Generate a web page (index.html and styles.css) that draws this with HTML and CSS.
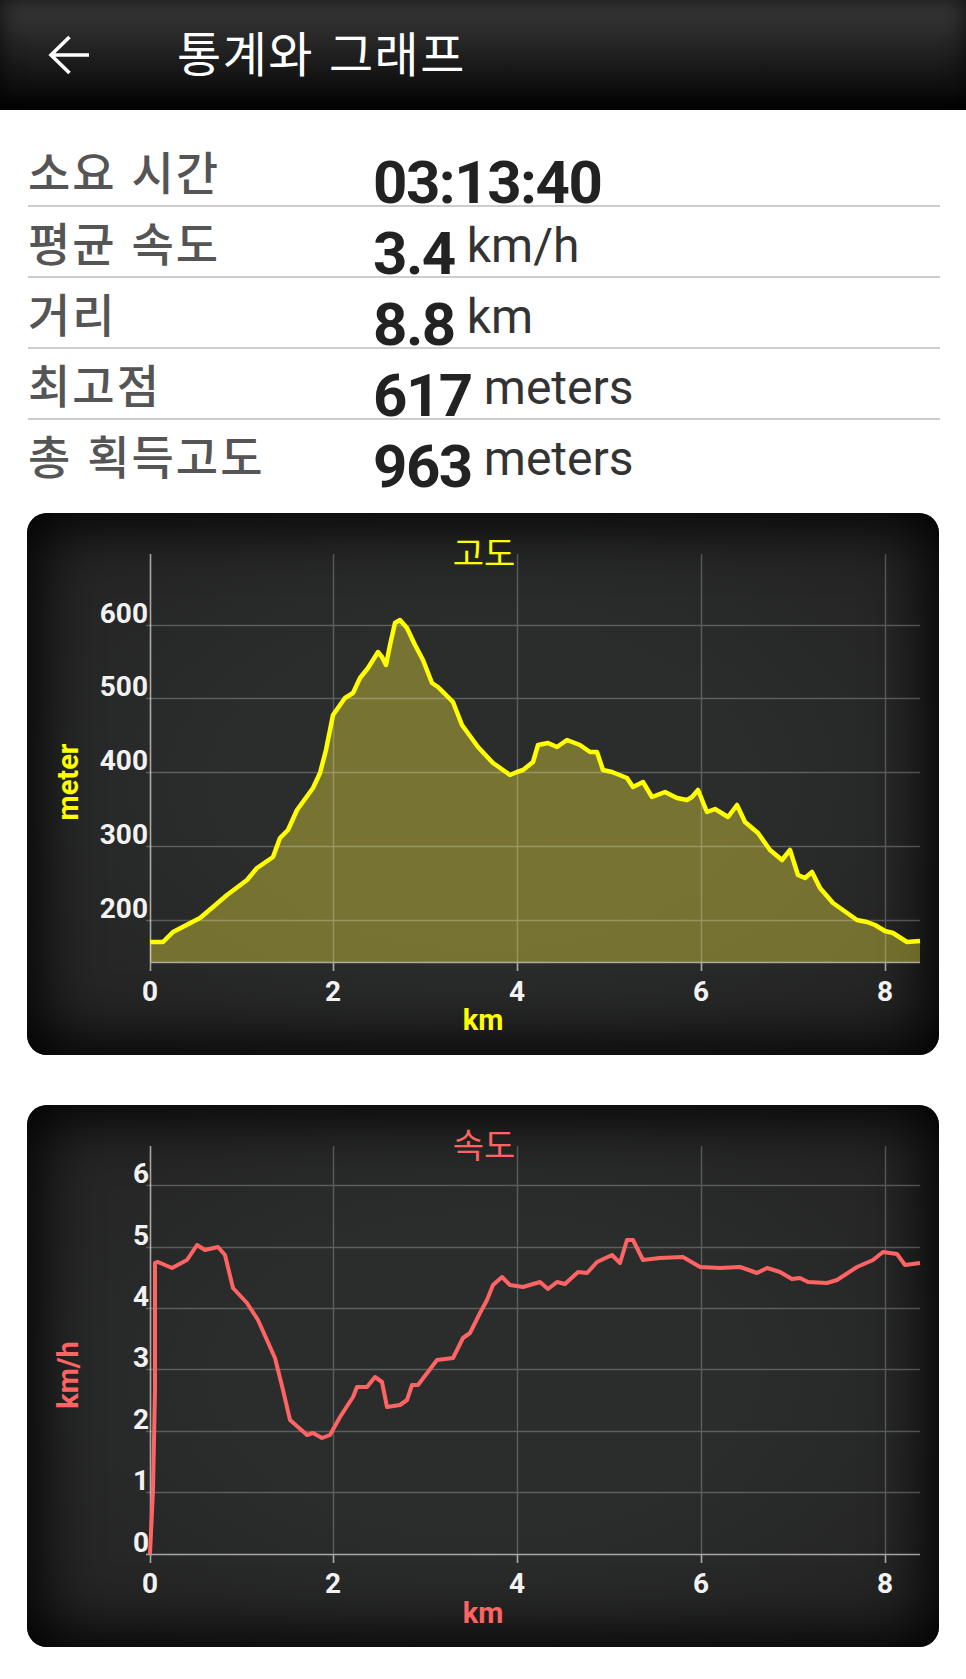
FILE: index.html
```html
<!DOCTYPE html>
<html lang="ko">
<head>
    <meta charset="utf-8">
    <title>통계와 그래프</title>
    <meta name="viewport" content="width=device-width,initial-scale=1">
    <link rel="stylesheet" href="styles.css">
</head>
<body>
    <div class="topBar">
        <svg class="backIcon" viewBox="0 0 44 40" width="44" height="40">
            <path d="M43 20H5 M23.5 2 L5 20 L23.5 38" />
        </svg>
        <div class="topTitle">통계와 그래프</div>
    </div>

    <div class="statList">
        <div class="statRow">
            <div class="statLabel">소요 시간</div>
            <div class="statValue">03:13:40</div>
        </div>
        <div class="statRow">
            <div class="statLabel">평균 속도</div>
            <div class="statValue">3.4<span class="statUnit">km/h</span></div>
        </div>
        <div class="statRow">
            <div class="statLabel">거리</div>
            <div class="statValue">8.8<span class="statUnit">km</span></div>
        </div>
        <div class="statRow">
            <div class="statLabel">최고점</div>
            <div class="statValue">617<span class="statUnit wide">meters</span></div>
        </div>
        <div class="statRow">
            <div class="statLabel">총 획득고도</div>
            <div class="statValue">963<span class="statUnit wide">meters</span></div>
        </div>
    </div>

    <!-- altitude -->
    <div class="chartCard">
        <svg class="chartSvg" viewBox="0 0 912 542" width="912" height="542">
            <text class="chartTitle alt" x="457" y="53">고도</text>
            <path class="altFill" d="M123,449 L123,429 L136,429 L146,419 L173,405 L186,394 L200,382 L220,367 L230,355 L246,344 L253,325 L261,317 L270,297 L286,275 L293,260 L299,237 L306,202 L318,185 L326,180 L333,165 L341,155 L351,139 L355,144 L359,152 L363,132 L368,110 L373,107 L380,115 L388,132 L396,147 L405,170 L411,174 L426,189 L435,212 L451,234 L466,250 L483,262 L490,259 L496,257 L506,249 L511,232 L521,230 L530,234 L540,227 L553,232 L563,239 L570,239 L576,257 L585,259 L600,265 L606,274 L616,269 L625,284 L638,279 L650,285 L660,287 L665,284 L671,277 L680,299 L688,296 L701,304 L710,292 L718,309 L731,320 L743,337 L755,347 L763,337 L771,362 L778,365 L785,359 L793,375 L806,390 L830,407 L840,409 L848,412 L858,418 L866,420 L880,429 L893,428 L893,449 Z" />
            <path class="grid" d="M306.5 41V449 M490.5 41V449 M674.5 41V449 M858.5 41V449 M119 112.5H893 M119 185.5H893 M119 259.5H893 M119 333.5H893 M119 407.5H893" />
            <path class="axis" d="M123.5 41V458 M123 449.5H893 M306.5 449V458 M490.5 449V458 M674.5 449V458 M858.5 449V458" />
            <path class="altLine" d="M123,429 L136,429 L146,419 L173,405 L186,394 L200,382 L220,367 L230,355 L246,344 L253,325 L261,317 L270,297 L286,275 L293,260 L299,237 L306,202 L318,185 L326,180 L333,165 L341,155 L351,139 L355,144 L359,152 L363,132 L368,110 L373,107 L380,115 L388,132 L396,147 L405,170 L411,174 L426,189 L435,212 L451,234 L466,250 L483,262 L490,259 L496,257 L506,249 L511,232 L521,230 L530,234 L540,227 L553,232 L563,239 L570,239 L576,257 L585,259 L600,265 L606,274 L616,269 L625,284 L638,279 L650,285 L660,287 L665,284 L671,277 L680,299 L688,296 L701,304 L710,292 L718,309 L731,320 L743,337 L755,347 L763,337 L771,362 L778,365 L785,359 L793,375 L806,390 L830,407 L840,409 L848,412 L858,418 L866,420 L880,429 L893,428" />
            <g class="yLabels">
                <text x="121" y="110">600</text>
                <text x="121" y="183">500</text>
                <text x="121" y="257">400</text>
                <text x="121" y="331">300</text>
                <text x="121" y="405">200</text>
            </g>
            <g class="xLabels">
                <text x="123" y="488">0</text>
                <text x="306" y="488">2</text>
                <text x="490" y="488">4</text>
                <text x="674" y="488">6</text>
                <text x="858" y="488">8</text>
            </g>
            <text class="axisTitle alt" x="456" y="517">km</text>
            <text class="axisTitle alt" transform="translate(51 269) rotate(-90)">meter</text>
        </svg>
    </div>

    <!-- speed -->
    <div class="chartCard">
        <svg class="chartSvg" viewBox="0 0 912 542" width="912" height="542">
            <text class="chartTitle spd" x="457" y="53">속도</text>
            <path class="grid" d="M306.5 41V449 M490.5 41V449 M674.5 41V449 M858.5 41V449 M119 80.5H893 M119 142.5H893 M119 203.5H893 M119 264.5H893 M119 326.5H893 M119 387.5H893" />
            <path class="axis" d="M123.5 41V458 M119 449.5H893 M306.5 449V458 M490.5 449V458 M674.5 449V458 M858.5 449V458" />
            <path class="spdLine" d="M123,449 L126,385 L127,335 L128,285 L128,158 L131,157 L145,163 L160,155 L170,140 L178,145 L191,142 L198,150 L206,183 L220,198 L231,215 L248,253 L256,285 L263,315 L280,330 L286,328 L295,333 L303,330 L313,312 L326,292 L330,282 L340,282 L348,272 L355,277 L360,302 L373,300 L380,295 L385,280 L391,280 L410,255 L426,253 L436,233 L443,228 L453,208 L460,195 L466,180 L475,172 L483,180 L496,182 L513,177 L521,184 L530,177 L538,179 L551,167 L560,168 L570,157 L585,150 L593,158 L600,135 L606,135 L616,155 L633,153 L656,152 L673,162 L693,163 L713,162 L730,168 L740,163 L753,167 L765,174 L773,173 L781,177 L800,178 L810,175 L830,162 L846,155 L856,147 L870,149 L878,160 L893,158" />
            <g class="yLabels">
                <text x="122" y="78">6</text>
                <text x="122" y="140">5</text>
                <text x="122" y="201">4</text>
                <text x="122" y="262">3</text>
                <text x="122" y="324">2</text>
                <text x="122" y="385">1</text>
                <text x="122" y="447">0</text>
            </g>
            <g class="xLabels">
                <text x="123" y="488">0</text>
                <text x="306" y="488">2</text>
                <text x="490" y="488">4</text>
                <text x="674" y="488">6</text>
                <text x="858" y="488">8</text>
            </g>
            <text class="axisTitle spd" x="456" y="518">km</text>
            <text class="axisTitle spd" transform="translate(51 270) rotate(-90)">km/h</text>
        </svg>
    </div>
</body>
</html>
```

FILE: styles.css
```css
html, body {
    margin: 0;
    padding: 0;
    background: #ffffff;
}
body {
    width: 966px;
    font-family: "Noto Sans CJK KR", "Noto Sans", sans-serif;
}

/* top bar */
.topBar {
    height: 110px;
    display: flex;
    align-items: center;
    background: linear-gradient(#3b3b3b, #1f1f1f 50%, #030303);
    box-shadow: inset 0 0 22px rgba(0, 0, 0, 0.75);
}
.backIcon {
    margin-left: 46px;
    flex: none;
}
.backIcon path {
    fill: none;
    stroke: #ffffff;
    stroke-width: 3.6;
}
.topTitle {
    margin-left: 87px;
    padding-bottom: 9px;
    color: #ffffff;
    font-size: 48px;
    line-height: 48px;
    letter-spacing: 1.5px;
}

/* stats */
.statList {
    padding: 26px 26px 0 28px;
}
.statRow {
    display: flex;
    align-items: flex-end;
    height: 69px;
    border-bottom: 2px solid #cdcdcd;
}
.statRow:last-child {
    border-bottom: none;
}
.statLabel {
    width: 345px;
    flex: none;
    padding-bottom: 12px;
    color: #555555;
    font-weight: 500;
    font-size: 46px;
    line-height: 46px;
    letter-spacing: 2px;
}
.statValue {
    color: #222222;
    font-family: Roboto, "Liberation Sans", sans-serif;
    font-weight: 700;
    font-size: 60px;
    line-height: 44px;
    letter-spacing: -1.5px;
}
.statUnit {
    margin-left: 12px;
    color: #333333;
    font-weight: 400;
    font-size: 48px;
    letter-spacing: 0;
    vertical-align: 12px;
}
.statUnit.wide {
    margin-left: 12px;
}

/* charts */
.chartCard {
    margin: 24px 27px 0;
    height: 542px;
    border-radius: 20px;
    overflow: hidden;
    background: radial-gradient(ellipse at 50% 50%, #2b2c2c 40%, #222 100%);
    box-shadow: inset 0 0 60px 10px #000000;
}
.chartCard + .chartCard {
    margin-top: 50px;
}
.chartSvg {
    display: block;
}
.chartSvg text {
    font-family: Roboto, "Liberation Sans", sans-serif;
}
.chartTitle {
    text-anchor: middle;
    font-size: 34px;
}
.chartSvg .chartTitle {
    font-family: "Noto Sans CJK KR", sans-serif;
}
.alt {
    fill: #ffff00;
}
.spd {
    fill: #ff6464;
}
.grid {
    fill: none;
    stroke: rgba(255, 255, 255, 0.24);
    stroke-width: 1.4;
}
.axis {
    fill: none;
    stroke: rgba(255, 255, 255, 0.6);
    stroke-width: 1.6;
}
.altFill {
    fill: rgba(220, 210, 60, 0.43);
}
.altLine {
    fill: none;
    stroke: #ffff00;
    stroke-width: 4.5;
    stroke-linejoin: round;
}
.spdLine {
    fill: none;
    stroke: #ff6464;
    stroke-width: 4;
    stroke-linejoin: round;
}
.yLabels text, .xLabels text {
    fill: #f2f2f2;
    font-weight: 700;
    font-size: 28px;
}
.yLabels text {
    text-anchor: end;
}
.xLabels text {
    text-anchor: middle;
}
.axisTitle {
    font-weight: 700;
    font-size: 29px;
    text-anchor: middle;
}
```
